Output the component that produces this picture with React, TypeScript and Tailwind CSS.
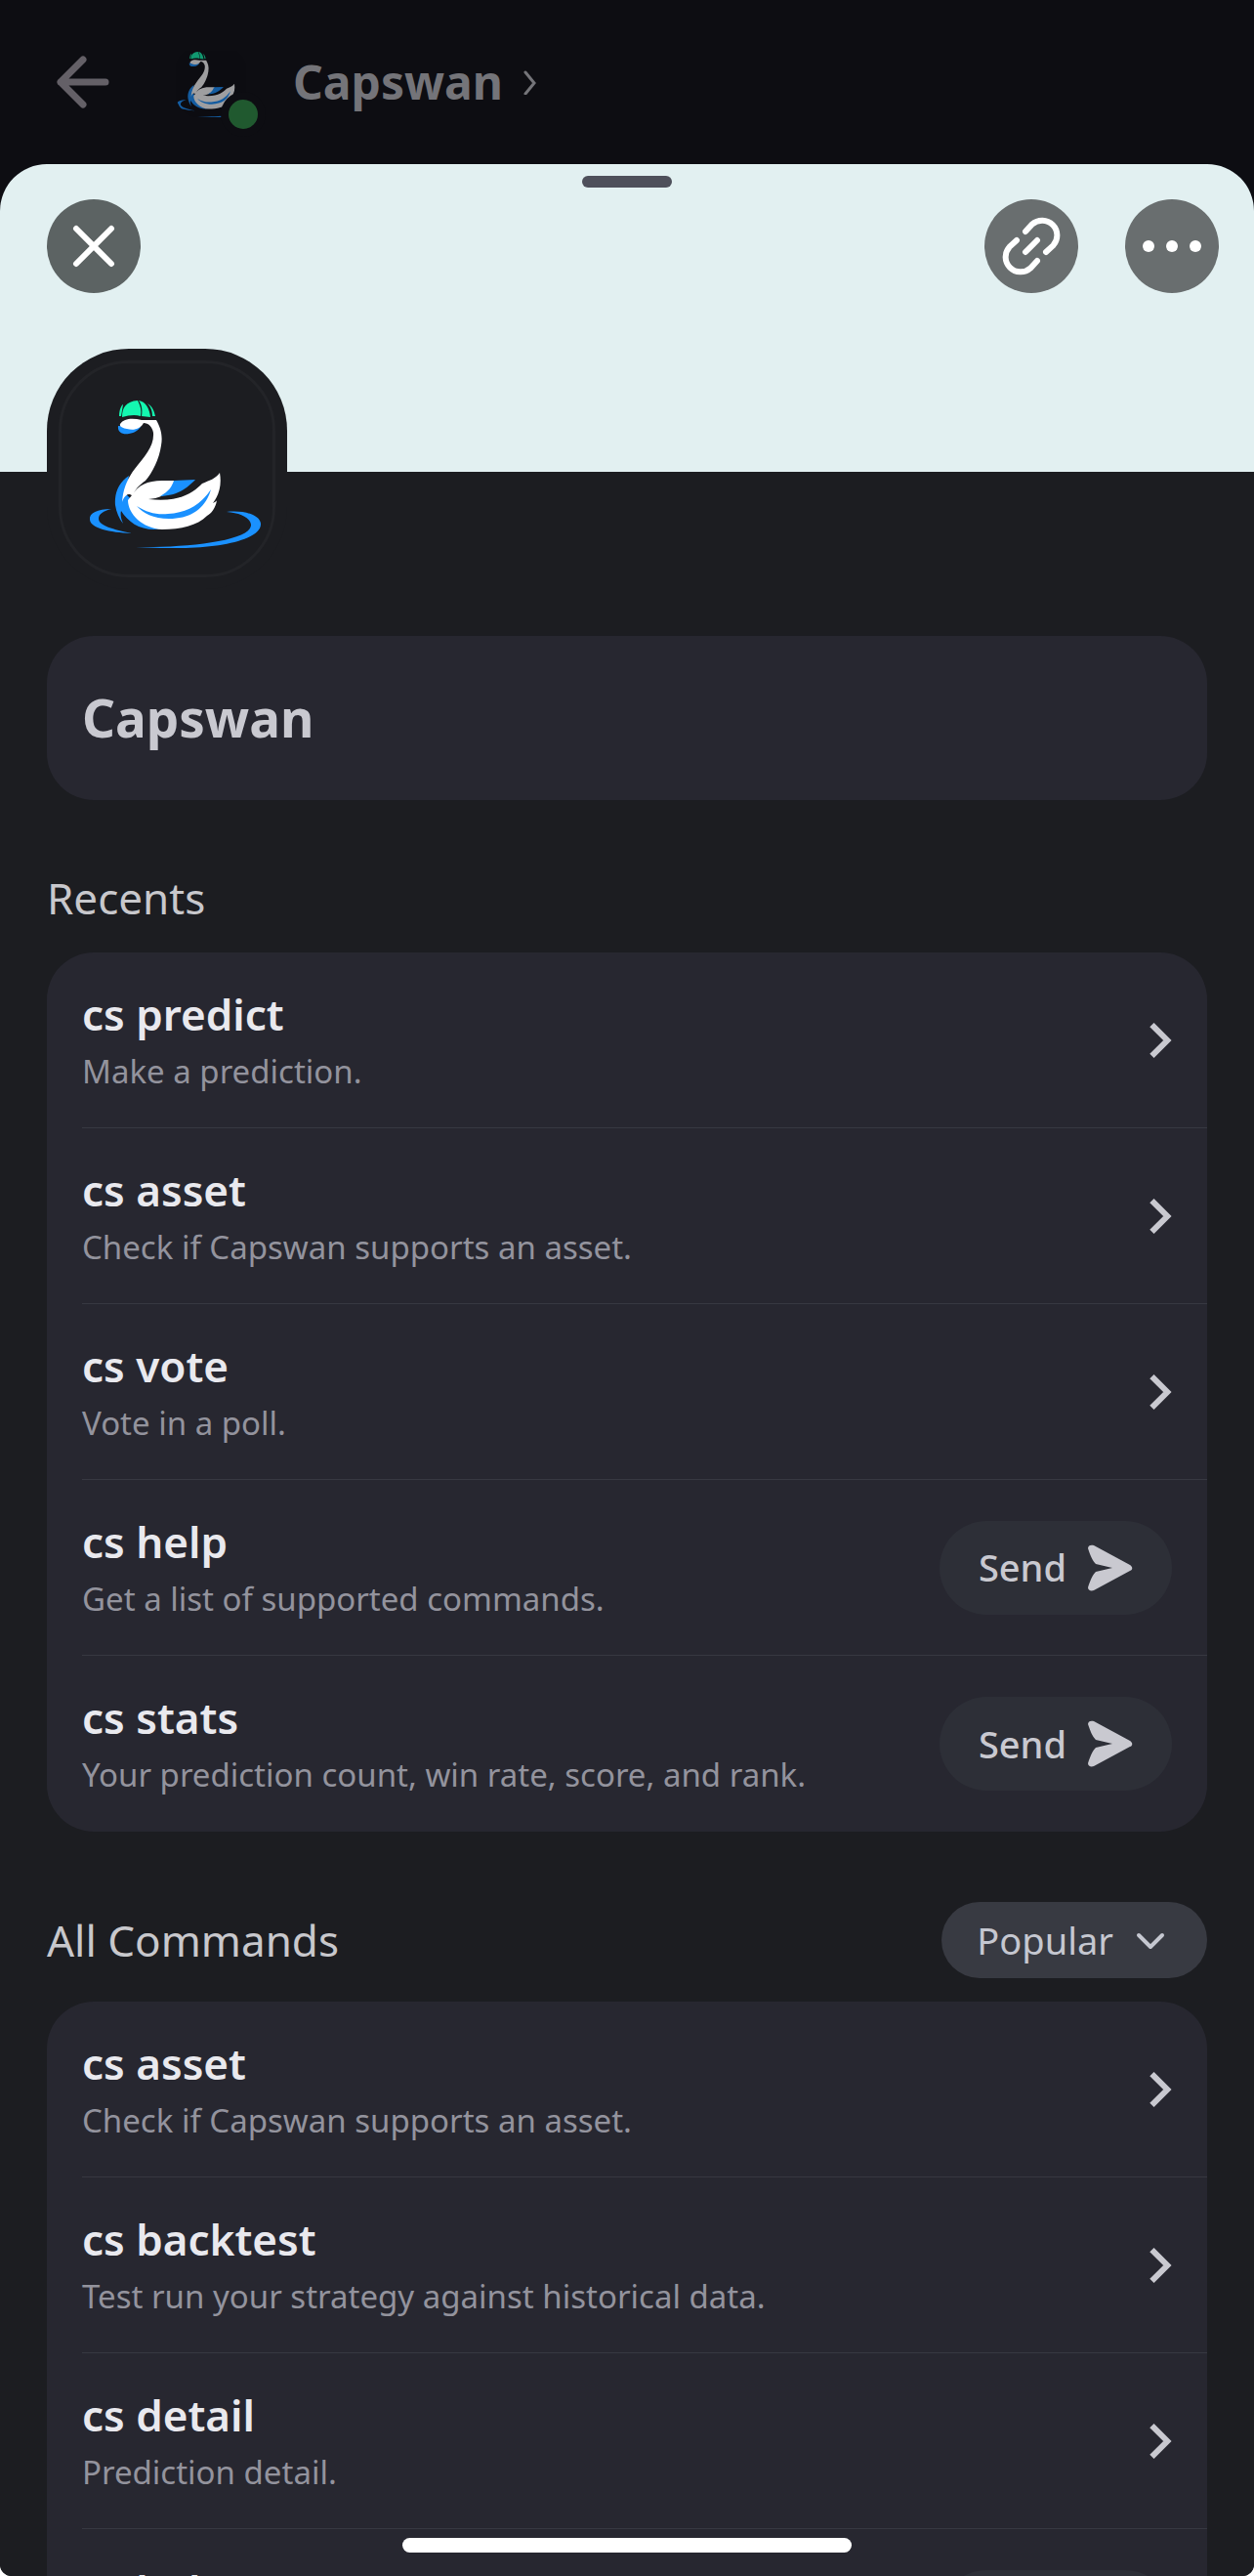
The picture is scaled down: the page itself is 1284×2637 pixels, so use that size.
import { useState } from "react";

type Command = { name: string; description: string; sendable?: boolean };

const RECENTS: Command[] = [
    { name: "cs predict", description: "Make a prediction." },
    { name: "cs asset", description: "Check if Capswan supports an asset." },
    { name: "cs vote", description: "Vote in a poll." },
    { name: "cs help", description: "Get a list of supported commands.", sendable: true },
    { name: "cs stats", description: "Your prediction count, win rate, score, and rank.", sendable: true },
];

const ALL_COMMANDS: Command[] = [
    { name: "cs asset", description: "Check if Capswan supports an asset." },
    { name: "cs backtest", description: "Test run your strategy against historical data." },
    { name: "cs detail", description: "Prediction detail." },
    { name: "cs help", description: "Get a list of supported commands.", sendable: true },
];

function SwanLogo({ className }: { className?: string }) {
    return (
        <svg viewBox="80 399 182 162" overflow="visible" preserveAspectRatio="xMidYMid slice" className={className} aria-hidden="true">
            {/* Water ring */}
            <path d="M114 521C100 521 91 525 92 532C93 541 112 545 135 546C116 542 101 538 101 531C101 526 106 523 114 521Z" fill="#1a91ff" />
            <path d="M232 524C247 522 266 526 267 536C268 551 232 560 190 561C172 561 155 561 139 560C190 561 258 554 257 537C256 530 246 525 232 524Z" fill="#1a91ff" />
            {/* Cap */}
            <path d="M122 426C122 420 124 415 126 414L124 426Z" fill="#14f7b0" />
            <path d="M125 427C125 417 129 411 141 410C144 416 145 420 144 426C138 424 132 425 125 427Z" fill="#14f7b0" />
            <path d="M142 410C149 411 153 418 154 427L145 426C146 419 145 414 142 410Z" fill="#14f7b0" />
            <path d="M151 413C156 416 158 421 159 426L156 426C156 420 154 416 151 413Z" fill="#14f7b0" />
            {/* Neck shade and breast */}
            <path d="M121 436C120 443 126 445 132 444C138 443 142 440 144 437Z" fill="#1a91ff" />
            <path d="M132 487C121 494 117 506 118 517C119 524 122 531 126 536C124 531 123 527 124 523C131 534 142 542 158 542L166 541L128 505Z" fill="#1a91ff" />
            {/* Head, neck, body and wings */}
            <path d="M123 434C127 428 136 428 145 430L160 430C164 437 167 445 165 456C163 470 156 484 149 492C142 497 138 501 136 508C131 503 127 508 125 514C126 500 131 489 138 480C148 467 158 457 157 443C156 437 152 433 147 433C144 439 137 441 130 439C126 438 122 437 123 434Z" fill="#ffffff" />
            <path d="M135 507C141 497 151 492 166 492L180 492C176 502 168 510 152 511C185 515 199 503 207 495C214 492 221 490 225 484C227 495 225 506 218 515C220 514 222 513 222 512C221 520 216 526 212 528C202 538 185 542 166 542C146 541 131 526 131 512Z" fill="#ffffff" />
            <path d="M178 492L200 491C191 500 183 507 164 508C173 503 176 498 178 492Z" fill="#1a91ff" />
            <path d="M140 518C151 525 160 527 172 526C192 525 206 516 216 501C211 519 197 531 173 531C157 531 146 525 140 518Z" fill="#1a91ff" />
        </svg>
    );
}

function CommandRow({ command, last }: { command: Command; last: boolean }) {
    return (
        <li className="pl-9">
            <div className={last ? "flex h-[180px] items-center justify-between pr-9" : "flex h-[180px] items-center justify-between border-b border-[#373841] pr-9"}>
                <div>
                    <h3 className="text-[44px] leading-[60px] font-semibold text-[#e9e9ee]">{command.name}</h3>
                    <p className="mt-1 text-[33px] leading-[50px] text-[#93939d]">{command.description}</p>
                </div>
                {command.sendable ? (
                    <button type="button" className="flex h-24 shrink-0 items-center gap-5 rounded-full bg-[#2d2f37] px-10 text-[38px] font-medium text-[#c9c9d0]">
                        Send
                        <svg viewBox="0 0 48 48" className="size-12" fill="currentColor" aria-hidden="true">
                            <path d="M2 4C2 1 5 0 8 1L45 21C48 23 48 26 45 27L8 47C5 48 2 47 2 44C5 35 7 31 10 28L27 24L10 20C7 17 5 13 2 4Z" />
                        </svg>
                    </button>
                ) : (
                    <button type="button" aria-label={"Open " + command.name} className="text-[#c9c9d0]">
                        <svg viewBox="0 0 24 36" className="h-9 w-6" fill="none" stroke="currentColor" strokeWidth="6" aria-hidden="true">
                            <path d="M3.4 2.1L19.3 18L3.4 33.9" />
                        </svg>
                    </button>
                )}
            </div>
        </li>
    );
}

function CommandList({ commands }: { commands: Command[] }) {
    return (
        <ul className="rounded-[48px] bg-[#272730]">
            {commands.map((command, i) => (
                <CommandRow key={command.name} command={command} last={i === commands.length - 1} />
            ))}
        </ul>
    );
}

export default function App() {
    const [order, setOrder] = useState("Popular");

    return (
        <div className="h-screen bg-white font-['Noto_Sans',sans-serif]">
            <div className="relative flex h-full flex-col overflow-hidden rounded-b-xl bg-[#0d0d12]">
                {/* Chat header, dimmed behind the sheet */}
                <header className="flex h-[168px] shrink-0 items-center pl-14 text-[#747479]">
                    <button type="button" aria-label="Back">
                        <svg viewBox="0 0 56 56" className="size-14" fill="none" stroke="#646067" strokeWidth="7" strokeLinecap="round" strokeLinejoin="round" aria-hidden="true">
                            <path d="M29 5L6 28L29 51M6 28H52" />
                        </svg>
                    </button>
                    <div className="relative ml-[68px] size-[72px]">
                        <div className="size-full overflow-hidden rounded-3xl">
                            <SwanLogo className="size-full opacity-60" />
                        </div>
                        <span className="absolute -right-3 -bottom-3 size-[30px] rounded-full bg-[#20592f] ring-8 ring-[#0d0d12]" />
                    </div>
                    <a href="#profile" className="ml-12 flex items-center gap-5 text-[48px] font-bold">
                        Capswan
                        <svg viewBox="0 0 16 26" className="h-[26px] w-4" fill="none" stroke="currentColor" strokeWidth="3" strokeLinecap="round" aria-hidden="true">
                            <path d="M3 3L12 14L3 25" />
                        </svg>
                    </a>
                </header>

                {/* Profile sheet */}
                <main className="min-h-0 flex-1 overflow-hidden rounded-t-[48px] bg-[#1c1d21]">
                    <div className="h-[315px] bg-[#e2f0f1] pt-3">
                        <div className="mx-auto h-3 w-[92px] rounded-full bg-[#4e505b]" />
                        <div className="mt-3 flex items-center pr-9 pl-12">
                            <button type="button" aria-label="Close" className="flex size-24 items-center justify-center rounded-full bg-[#5c6363]">
                                <svg viewBox="0 0 48 48" className="size-12" fill="none" stroke="#ffffff" strokeWidth="6" strokeLinecap="round" aria-hidden="true">
                                    <path d="M6 6L42 42M42 6L6 42" />
                                </svg>
                            </button>
                            <button type="button" aria-label="Copy link" className="ml-auto flex size-24 items-center justify-center rounded-full bg-[#696e6f]">
                                <svg viewBox="0 0 72 72" className="size-[72px]" fill="none" stroke="#ffffff" strokeWidth="6" strokeLinecap="round" aria-hidden="true">
                                    <path d="M30 21L36.9 13.5A15.3 15.3 0 0 1 58.5 35.1L51 42M21 30L13.5 36.9A15.3 15.3 0 0 0 35.1 58.5L42 51M30 42L42 30" />
                                </svg>
                            </button>
                            <button type="button" aria-label="More" className="ml-12 flex size-24 items-center justify-center gap-3 rounded-full bg-[#696e6f]">
                                <span className="size-3 rounded-full bg-white" />
                                <span className="size-3 rounded-full bg-white" />
                                <span className="size-3 rounded-full bg-white" />
                            </button>
                        </div>
                    </div>

                    <div className="px-12">
                        <div className="relative -mt-[126px] size-[246px] rounded-[84px] bg-[#1c1d21] p-3">
                            <div className="flex size-full items-center justify-center rounded-[72px] border-3 border-[#232428]">
                                <SwanLogo className="h-[162px] w-[182px]" />
                            </div>
                        </div>

                        <div className="mt-12 flex h-[168px] items-center rounded-[48px] bg-[#272730] px-9">
                            <h1 className="text-[53px] leading-[72px] font-bold text-[#c9c9d0]">Capswan</h1>
                        </div>

                        <h2 className="mt-[72px] mb-7 text-[44px] leading-[56px] text-[#c8c8cc]">Recents</h2>
                        <CommandList commands={RECENTS} />

                        <div className="mt-[72px] mb-6 flex items-center justify-between">
                            <h2 className="text-[44px] leading-[56px] text-[#c8c8cc]">All Commands</h2>
                            <button
                                type="button"
                                onClick={() => setOrder(order === "Popular" ? "Newest" : "Popular")}
                                className="flex h-[78px] items-center gap-5 rounded-full bg-[#383a42] pr-10 pl-9 text-[38px] text-[#c5c7d0]"
                            >
                                {order}
                                <svg viewBox="0 0 36 24" className="h-6 w-9" fill="none" stroke="currentColor" strokeWidth="4" strokeLinecap="round" strokeLinejoin="round" aria-hidden="true">
                                    <path d="M6 7L18 19L30 7" />
                                </svg>
                            </button>
                        </div>
                        <CommandList commands={ALL_COMMANDS} />
                    </div>
                </main>

                {/* Home indicator */}
                <div className="absolute bottom-6 left-1/2 h-[15px] w-[460px] -translate-x-1/2 rounded-full bg-white" />
            </div>
        </div>
    );
}
